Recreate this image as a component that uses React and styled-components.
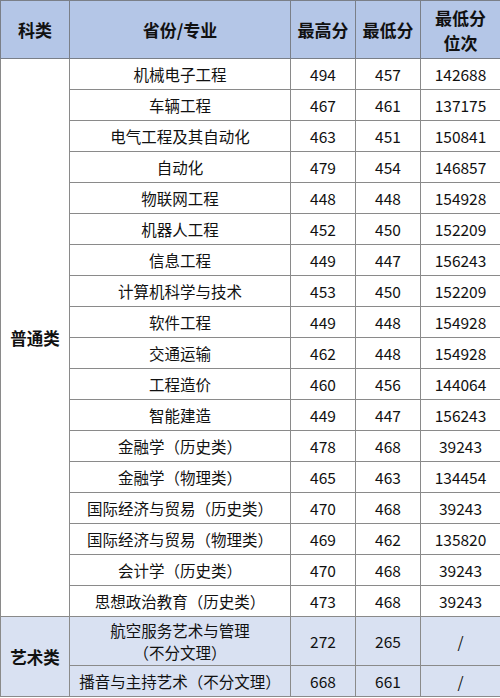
import styled, { createGlobalStyle } from 'styled-components'

const GlobalStyle = createGlobalStyle`
  body {
    margin: 0;
    background: #fff;
    font-family: "Noto Sans CJK SC", "Noto Sans", sans-serif;
  }
`

const general = [
  ['机械电子工程', 494, 457, 142688],
  ['车辆工程', 467, 461, 137175],
  ['电气工程及其自动化', 463, 451, 150841],
  ['自动化', 479, 454, 146857],
  ['物联网工程', 448, 448, 154928],
  ['机器人工程', 452, 450, 152209],
  ['信息工程', 449, 447, 156243],
  ['计算机科学与技术', 453, 450, 152209],
  ['软件工程', 449, 448, 154928],
  ['交通运输', 462, 448, 154928],
  ['工程造价', 460, 456, 144064],
  ['智能建造', 449, 447, 156243],
  ['金融学（历史类）', 478, 468, 39243],
  ['金融学（物理类）', 465, 463, 134454],
  ['国际经济与贸易（历史类）', 470, 468, 39243],
  ['国际经济与贸易（物理类）', 469, 462, 135820],
  ['会计学（历史类）', 470, 468, 39243],
  ['思想政治教育（历史类）', 473, 468, 39243],
]

const art = [
  [['航空服务艺术与管理', '（不分文理）'], 272, 265, '/', 48],
  [['播音与主持艺术（不分文理）'], 668, 661, '/', 29],
]

const Table = styled.table`
  width: 500px;
  border-collapse: collapse;
  table-layout: fixed;
  color: #111;
  border: 1px solid #5a5a5a;
`

const HeadCell = styled.th`
  height: 57px;
  padding: 0;
  background: #b4c6e7;
  border: 1px solid #7a7f88;
  font-size: 17px;
  font-weight: 700;
  line-height: 25px;
  text-align: center;
  vertical-align: middle;
`

const Cell = styled.td`
  height: ${p => p.$h || 30}px;
  padding: 0;
  background: ${p => (p.$art ? '#d9e1f2' : '#fff')};
  border: 1px solid #8a8a8a;
  font-size: 15.5px;
  line-height: 22px;
  text-align: center;
  vertical-align: middle;
  white-space: nowrap;
`

const GroupCell = styled(Cell)`
  font-size: 16.5px;
  font-weight: 700;
`

const App = () => (
  <>
    <GlobalStyle />
    <Table>
      <colgroup>
        <col style={{ width: 69 }} />
        <col style={{ width: 221 }} />
        <col style={{ width: 65 }} />
        <col style={{ width: 65 }} />
        <col style={{ width: 80 }} />
      </colgroup>
      <thead>
        <tr>
          <HeadCell>科类</HeadCell>
          <HeadCell>省份/专业</HeadCell>
          <HeadCell>最高分</HeadCell>
          <HeadCell>最低分</HeadCell>
          <HeadCell>最低分<br />位次</HeadCell>
        </tr>
      </thead>
      <tbody>
        {general.map(([name, hi, lo, rank], i) => (
          <tr key={name}>
            {i === 0 && <GroupCell rowSpan={general.length}>普通类</GroupCell>}
            <Cell $h={i % 4 === 2 || i === 17 ? 29 : 30}>{name}</Cell>
            <Cell>{hi}</Cell>
            <Cell>{lo}</Cell>
            <Cell>{rank}</Cell>
          </tr>
        ))}
        {art.map(([lines, hi, lo, rank, h], i) => (
          <tr key={lines[0]}>
            {i === 0 && <GroupCell $art rowSpan={art.length}>艺术类</GroupCell>}
            <Cell $art $h={h}>
              {lines.map((l, j) => (
                <div key={j}>{l}</div>
              ))}
            </Cell>
            <Cell $art>{hi}</Cell>
            <Cell $art>{lo}</Cell>
            <Cell $art>{rank}</Cell>
          </tr>
        ))}
      </tbody>
    </Table>
  </>
)

export default App
